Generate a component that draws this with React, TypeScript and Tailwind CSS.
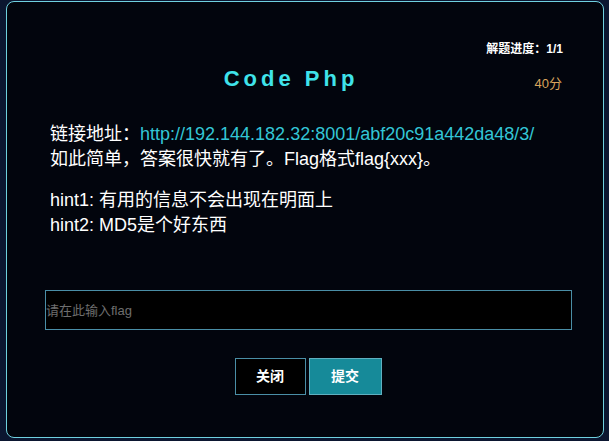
const App = () => {
    return (
        <div className="w-[609px] h-[441px] bg-[#0b1630] pt-[1px] pl-[6px] font-['Liberation_Sans','Noto_Sans_CJK_SC',sans-serif]">
            <div className="w-[598px] h-[437px] rounded-[8px] border border-[#6fd0df] bg-[#02050d] flex flex-col">
                <div className="flex justify-end pr-[40px] pt-[38px] text-[12px] font-bold text-white leading-[18px]">
                    解题进度：1/1
                </div>
                <div className="relative flex justify-center mt-[6px] pr-[28px]">
                    <h1 className="text-[22px] font-bold tracking-[4px] text-[#3fe3ea] leading-[30px]">Code Php</h1>
                    <span className="absolute right-[41px] top-[10px] text-[13px] text-[#d9a45c]">40分</span>
                </div>
                <div className="pl-[43px] mt-[28px] text-[18px] text-white leading-[25px]">
                    <p>链接地址：<a className="text-[#33c6d6]">http://192.144.182.32:8001/abf20c91a442da48/3/</a></p>
                    <p>如此简单，答案很快就有了。Flag格式flag{'{xxx}'}。</p>
                    <p className="mt-[16px]">hint1: 有用的信息不会出现在明面上</p>
                    <p>hint2: MD5是个好东西</p>
                </div>
                <div className="pl-[38px] mt-[52px]">
                    <input
                        placeholder="请在此输入flag"
                        className="w-[527px] h-[40px] border border-[#4a8ea6] bg-black text-[13px] text-white placeholder:text-[#6e6e6e] outline-none"
                    />
                </div>
                <div className="flex justify-center gap-[3px] mt-[28px] pl-[6px]">
                    <button className="w-[71px] h-[37px] border border-[#4a8ea6] bg-black text-white text-[14px] font-bold">关闭</button>
                    <button className="w-[73px] h-[37px] border border-[#5fb0c0] bg-[#168a99] text-white text-[14px] font-bold">提交</button>
                </div>
            </div>
        </div>
    )
}

export default App
